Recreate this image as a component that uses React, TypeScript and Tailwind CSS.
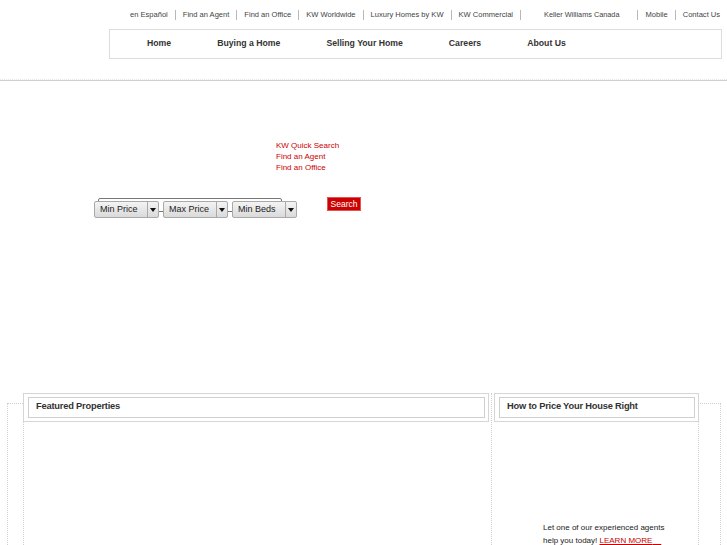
import React from 'react';

const topLinks = ['en Español', 'Find an Agent', 'Find an Office', 'KW Worldwide', 'Luxury Homes by KW', 'KW Commercial'];
const navItems = ['Home', 'Buying a Home', 'Selling Your Home', 'Careers', 'About Us'];

function Sep() {
  return <span className="mx-[7px] inline-block h-[10px] w-px shrink-0 bg-[#b8b8b8]" />;
}

function FakeSelect({ label, width }: { label: string; width: string }) {
  return (
    <div className={`flex h-[17px] ${width} rounded-[2px] border border-[#a9a9a9] bg-gradient-to-b from-[#f4f4f4] to-[#dadada]`}>
      <div className="flex flex-1 items-center pl-[5px] text-[9px] text-[#222]">{label}</div>
      <div className="flex w-[11px] items-center justify-center border-l border-[#a9a9a9]">
        <svg width="6" height="4" viewBox="0 0 6 4">
          <path d="M0 0h6L3 4z" fill="#111" />
        </svg>
      </div>
    </div>
  );
}

function PanelHeader({ title, className }: { title: string; className: string }) {
  return (
    <div className={`border border-[#d6d6d6] bg-white py-[3px] pl-[4px] pr-[3px] ${className}`}>
      <div className="h-[21px] border border-[#d0d0d0] pl-[7px] pt-px text-[9.3px] font-bold leading-[14px] tracking-[-0.2px] text-[#333]">
        {title}
      </div>
    </div>
  );
}

export default function App() {
  return (
    <div
      className="h-[545px] w-full overflow-hidden bg-white"
      style={{ fontFamily: '"Liberation Sans", Arial, sans-serif' }}
    >
      {/* utility links */}
      <div className="flex h-[29px] items-center whitespace-nowrap pl-[130px] pt-px text-[7.55px] text-[#444]">
        {topLinks.map((t, i) => (
          <React.Fragment key={t}>
            <span className="shrink-0">{t}</span>
            {i < topLinks.length - 1 && <Sep />}
          </React.Fragment>
        ))}
        <span className="ml-[7px] inline-block h-[10px] w-px shrink-0 bg-[#b8b8b8]" />
        <span className="ml-[23px] mr-[11px] shrink-0 text-[7.3px]">Keller Williams Canada</span>
        <Sep />
        <span className="shrink-0">Mobile</span>
        <Sep />
        <span className="shrink-0">Contact Us</span>
      </div>

      {/* main nav */}
      <div className="ml-[109px] flex h-[30px] w-[613px] items-center gap-[46px] whitespace-nowrap border border-[#dcdcdc] pl-[37px] text-[8.7px] font-bold text-[#333]">
        {navItems.map((n) => (
          <span key={n}>{n}</span>
        ))}
      </div>

      <div className="mt-[20px] border-t border-dotted border-[#e8e8e8]" />
      <div className="h-px bg-[#cfcfcf]" />

      {/* quick search */}
      <div className="ml-[276px] mt-[59px] flex flex-col text-[8px] leading-[11px] text-[#cc0000]">
        <span>KW Quick Search</span>
        <span>Find an Agent</span>
        <span>Find an Office</span>
      </div>

      <div className="relative ml-[94px] mt-[24px] flex items-start">
        <div className="absolute left-[4px] top-px h-[14px] w-[184px] rounded-[2px] border border-[#777] bg-white" />
        <div className="relative mt-[4px] flex gap-[4px]">
          <FakeSelect label="Min Price" width="w-[65px]" />
          <FakeSelect label="Max Price" width="w-[65px]" />
          <FakeSelect label="Min Beds" width="w-[65px]" />
        </div>
        <button className="ml-[30px] flex h-[14px] w-[34px] items-center justify-center border border-[#e05555] bg-[#cc0000] text-[8.5px] text-white">
          Search
        </button>
      </div>

      {/* lower panels */}
      <div className="ml-[7px] mt-[185px] h-[200px] w-[714px] border-l border-r border-t border-dotted border-[#cfcfcf] pl-[15px]">
        <div className="-mt-[11px] flex">
          <div className="h-[200px] w-[469px] border-l border-r border-dotted border-[#cfcfcf] bg-white">
            <PanelHeader title="Featured Properties" className="-ml-px w-[466px]" />
          </div>
          <div className="h-[200px] w-[207px] border-r border-dotted border-[#cfcfcf] bg-white">
            <PanelHeader title="How to Price Your House Right" className="ml-[2px] w-[205px]" />
            <div className="mt-[99px] pl-[51px] text-[8px] leading-[13px] text-[#222]">
              Let one of our experienced agents
              <br />
              help you today!{' '}
              <span className="text-[#cc0000] underline">LEARN MORE{'\u00a0\u00a0\u00a0\u00a0'}</span>
            </div>
          </div>
        </div>
      </div>
    </div>
  );
}
